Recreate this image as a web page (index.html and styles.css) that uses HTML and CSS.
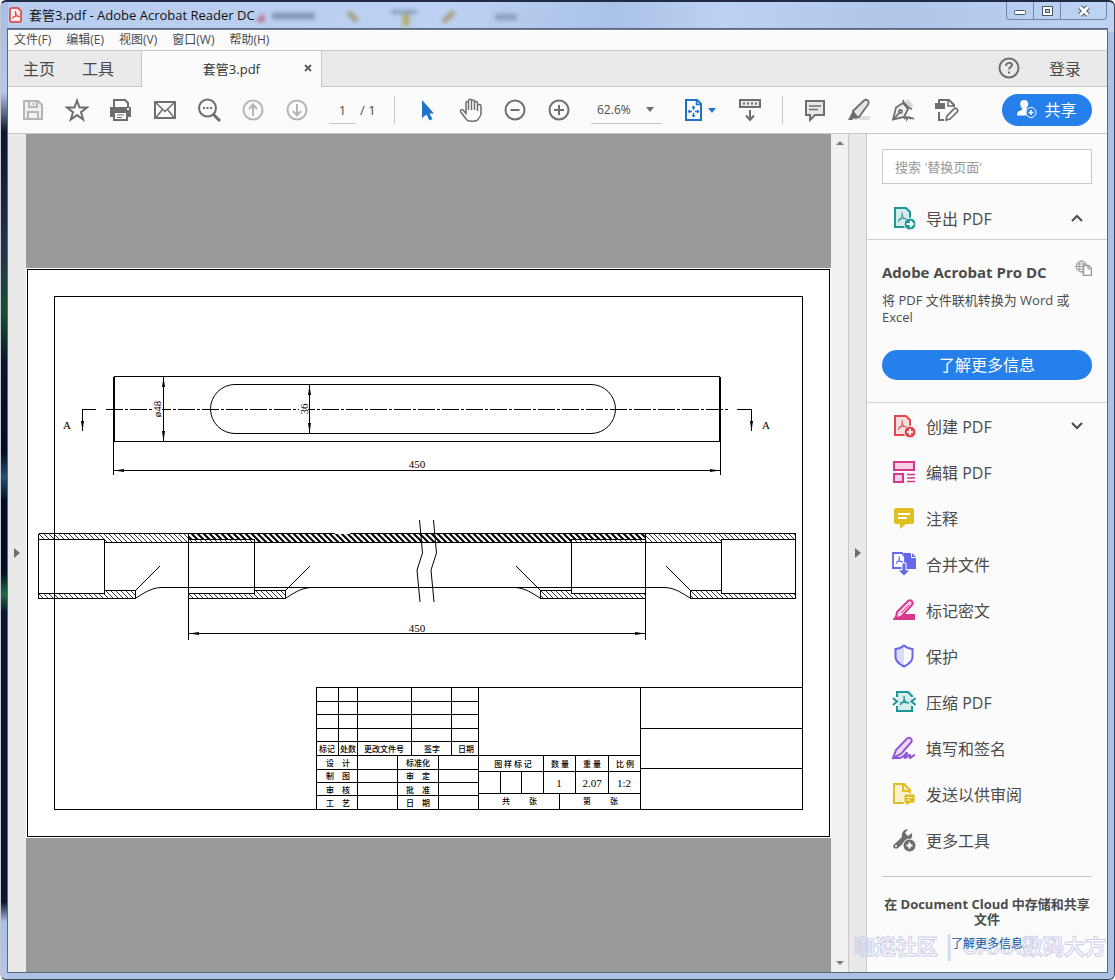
FILE: index.html
```html
<!DOCTYPE html>
<html lang="zh-CN">
<head>
  <meta charset="UTF-8">
  <title>套管3.pdf - Adobe Acrobat Reader DC</title>
  <link rel="stylesheet" href="styles.css">
</head>
<body>
  <div class="window">
    <header class="titlebar">
      <svg class="app-icon" width="13" height="16" viewBox="0 0 13 16">
        <path d="M1 2.5Q1 1 2.500 1H9l3 3v9.500Q12 15 10.500 15h-8Q1 15 1 13.500z" fill="#fbeeee" stroke="#dc3a35" stroke-width="1.500"/>
        <path d="M6.500 4.500c1.500 3-1 6-3 7M6.500 4.500c-1.500 2 2 5 4 5.500M3.500 10.500c2-1.500 5-2 7-1" fill="none" stroke="#dc3a35"/>
      </svg>
      <span class="title">套管3.pdf - Adobe Acrobat Reader DC</span>
      <svg class="glass" width="300" height="22" viewBox="0 0 300 22">
        <path d="M7 17l8-8v9z" fill="#b5395f"/>
        <path d="M23 12h43" stroke="#6c82a5" stroke-width="6"/>
        <path d="M99 8l9 9M205 8l-11 10" stroke="#a08a55" stroke-width="5"/>
        <path d="M142 8h26" stroke="#64799f" stroke-width="3"/>
        <path d="M157 10v12" stroke="#b1a34c" stroke-width="7"/>
        <path d="M246 13h22" stroke="#7c90b2" stroke-width="6"/>
      </svg>
      <div class="caption">
        <button type="button" aria-label="最小化"><svg width="14" height="12"><rect x="1.500" y="5.500" width="11" height="4" rx="1" fill="#fff" stroke="#4b566c"/></svg></button>
        <button type="button" aria-label="最大化"><svg width="14" height="12"><rect x="2.500" y="1.500" width="10" height="9" fill="#fff" stroke="#4b566c"/><rect x="5.500" y="4.500" width="4" height="3" fill="#b9cdec" stroke="#4b566c"/></svg></button>
        <button type="button" class="close" aria-label="关闭"><svg width="14" height="12"><path d="M3 2l8 8M11 2l-8 8" stroke="#4b566c" stroke-width="5"/><path d="M3 2l8 8M11 2l-8 8" stroke="#fff" stroke-width="3"/></svg></button>
      </div>
    </header>

    <div class="client">
      <nav class="menu">
        <a href="#">文件(F)</a>
        <a href="#">编辑(E)</a>
        <a href="#">视图(V)</a>
        <a href="#">窗口(W)</a>
        <a href="#">帮助(H)</a>
      </nav>

      <div class="tabs">
        <div class="home-tabs">
          <a href="#">主页</a>
          <a href="#">工具</a>
        </div>
        <div class="doc-tab">
          <span>套管3.pdf</span>
          <button type="button" aria-label="关闭标签"><svg width="8" height="8"><path d="M1 1l6 6M7 1L1 7" stroke="#5f5f5f" stroke-width="2"/></svg></button>
        </div>
        <div class="account">
          <button type="button" aria-label="帮助">
            <svg width="22" height="22" viewBox="0 0 22 22" fill="none" stroke="#6e6e6e" stroke-width="2"><circle cx="11" cy="11" r="9.500"/><path d="M8 9c0-4 6-4 6-1 0 2-3 2-3 4.500M11 14.500v2"/></svg>
          </button>
          <a href="#">登录</a>
        </div>
      </div>

      <div class="toolbar">
        <button type="button" class="tool" aria-label="保存" disabled>
          <svg width="24" height="24" viewBox="0 0 24 24" fill="none" stroke="#b5b5b5" stroke-width="2"><path d="M3 3h14l4 4v14H3z" fill="#f0f0f0"/><path d="M8 3v6h8V3" /><path d="M12.500 5v2M7 21v-7h10v7"/></svg>
        </button>
        <button type="button" class="tool" aria-label="加星标">
          <svg width="24" height="24" viewBox="0 0 24 24" fill="none" stroke="#6e6e6e" stroke-width="2"><path d="M12 2.500l2.500 7h7.500l-6 4.700 2.200 7.300-6.200-4.400-6.200 4.400L8 14.200 2 9.500h7.500z"/></svg>
        </button>
        <button type="button" class="tool" aria-label="打印">
          <svg width="24" height="24" viewBox="0 0 24 24"><path d="M5 9V2h11l3 3v4" fill="#fff" stroke="#6e6e6e" stroke-width="2"/><path d="M1 9h21v10H1z" fill="#6e6e6e"/><path d="M5 14h13v8H5z" fill="#fff" stroke="#6e6e6e" stroke-width="2"/><path d="M8 17h7M8 19.500h5" stroke="#6e6e6e"/><path d="M18 11h2" stroke="#fff" stroke-width="2"/></svg>
        </button>
        <button type="button" class="tool" aria-label="邮件">
          <svg width="24" height="24" viewBox="0 0 24 24" fill="none" stroke="#6e6e6e" stroke-width="2"><path d="M2 4h20v16H2z"/><path d="M2.500 4.500l9.500 9 9.500-9M3 19.500l6.500-8M21 19.500l-6.500-8" stroke-width="1.500"/></svg>
        </button>
        <button type="button" class="tool" aria-label="查找">
          <svg width="24" height="24" viewBox="0 0 24 24" fill="none" stroke="#6e6e6e" stroke-width="2"><circle cx="10.500" cy="10" r="8.500"/><path d="M16 16l7 7" stroke-width="3"/><path d="M6 10h2M9.500 10h2M13 10h2"/></svg>
        </button>
        <button type="button" class="tool" aria-label="上一页" disabled>
          <svg width="24" height="24" viewBox="0 0 24 24" fill="none" stroke="#b5b5b5" stroke-width="2"><circle cx="12" cy="12" r="9.500"/><path d="M12 18V7M8 11l4-4.500 4 4.500"/></svg>
        </button>
        <button type="button" class="tool" aria-label="下一页" disabled>
          <svg width="24" height="24" viewBox="0 0 24 24" fill="none" stroke="#b5b5b5" stroke-width="2"><circle cx="12" cy="12" r="9.500"/><path d="M12 6v11M8 13l4 4.500 4-4.500"/></svg>
        </button>
        <input class="page-number" type="text" value="1" aria-label="页码">
        <span class="page-total">/ 1</span>
        <span class="separator"></span>
        <button type="button" class="tool" aria-label="选择工具">
          <svg width="24" height="24" viewBox="0 0 24 24"><path d="M7 2v18l4.500-3.500 3 6 3-1.500-3-5.500H19z" fill="#1f74ca"/></svg>
        </button>
        <button type="button" class="tool" aria-label="抓手工具">
          <svg width="24" height="24" viewBox="0 0 24 24" fill="#fff" stroke="#6e6e6e" stroke-width="1.500"><path d="M8.500 22.500C6 20 4 17 1.500 13.500c-.5-2 1.500-2.500 3-1l2.500 3V5c0-2 2.500-2 2.500 0v7V3c0-2.200 3-2.200 3 0v9V3.500c0-2 3-2 3 0V12V5c0-2 3-2 3 0v8V8c0-2 3.500-2 3.500 0L22 16c-.5 3-2 4.500-4 6.500-2 1-7 1-9.500 0z"/></svg>
        </button>
        <button type="button" class="tool" aria-label="缩小">
          <svg width="24" height="24" viewBox="0 0 24 24" fill="none" stroke="#6e6e6e" stroke-width="2"><circle cx="12" cy="12" r="9.500"/><path d="M7.500 12h9"/></svg>
        </button>
        <button type="button" class="tool" aria-label="放大">
          <svg width="24" height="24" viewBox="0 0 24 24" fill="none" stroke="#6e6e6e" stroke-width="2"><circle cx="12" cy="12" r="9.500"/><path d="M7 12h10M12 7v10"/></svg>
        </button>
        <span class="zoom">
          <select aria-label="缩放"><option>62.6%</option></select>
          <svg class="caret" width="8" height="5"><path d="M0 0h8L4 5z" fill="#6e6e6e"/></svg>
        </span>
        <button type="button" class="fit" aria-label="适合页面">
          <svg width="20" height="24" viewBox="0 0 20 24" fill="none" stroke="#1f74ca" stroke-width="2"><path d="M2 2h11l4 4v16H2z"/><path d="M12.500 2v4.500H17" stroke-width="1.500"/><path d="M9.500 8v4M9.500 15v4M4 13.500h4M11 13.500h4" stroke-width="1.500"/><path d="M7.500 10l2-2.500 2 2.500zM7.500 17l2 2.500 2-2.500zM6 11.500l-2.500 2 2.500 2zM13 11.500l2.500 2-2.500 2z" fill="#1f74ca" stroke="none"/></svg>
          <svg width="8" height="5"><path d="M0 0h8L4 5z" fill="#1f74ca"/></svg>
        </button>
        <button type="button" class="tool" aria-label="滚动页面">
          <svg width="24" height="24" viewBox="0 0 24 24" fill="none" stroke="#6e6e6e" stroke-width="2"><path d="M2 2h20v7H2z" fill="#e6e6e6"/><path d="M5 5.500h14" stroke-dasharray="2 2"/><path d="M12 12v9M8 17.500l4 4.500 4-4.500"/></svg>
        </button>
        <span class="separator"></span>
        <button type="button" class="tool" aria-label="添加附注">
          <svg width="24" height="24" viewBox="0 0 24 24" fill="#e8e8e8" stroke="#6e6e6e" stroke-width="2"><path d="M3 3h18v14H12l-5 5v-5H3z"/><path d="M6 8h12M6 11.500h9" stroke-width="1.500"/></svg>
        </button>
        <button type="button" class="tool" aria-label="高亮文本">
          <svg width="24" height="24" viewBox="0 0 24 24"><path d="M8 18h15v4H4z" fill="#dedede"/><path d="M6 13L17 2.500c3-2 6 1 4 4L12 19H7z" fill="#e6e6e6" stroke="#6e6e6e" stroke-width="1.800"/><path d="M6 12.500l5.500 6.500L9 21l-2-1-2 2H1z" fill="#6e6e6e"/></svg>
        </button>
        <button type="button" class="tool" aria-label="签名">
          <svg width="24" height="24" viewBox="0 0 24 24" fill="none" stroke="#6e6e6e" stroke-width="1.800"><path d="M15 3l6 6" stroke="#d8d8d8" stroke-width="5"/><path d="M12 5L5 9.500 2 21.500l11-2.500 4-8z" fill="#f0f0f0"/><path d="M12 2l1 3 5 5 3 1M3 21l5-6"/><path d="M13 21c4-4 3-1 3 0 2-3 3-2 3 0 1-2 2-1 4 0"/><circle cx="9.500" cy="13.500" r="1.500"/></svg>
        </button>
        <button type="button" class="tool" aria-label="更多编辑工具">
          <svg width="24" height="24" viewBox="0 0 24 24" fill="none" stroke="#6e6e6e" stroke-width="2"><path d="M4 6V2h10l5 5v2M4 14v8h5"/><path d="M0 5h10v6H0z" fill="#6e6e6e" stroke="none"/><path d="M13 2v6h6" stroke-width="1.500"/><path d="M11 22l1-4 7.500-7.500c1.500-1 4 1.500 3 3L15 21z" fill="#fff" stroke-width="1.700"/></svg>
        </button>
        <button type="button" class="share">
          <svg width="20" height="18" viewBox="0 0 20 18"><path d="M7 0c6 0 4.500 7 2.500 8v2c3 1 5 1.500 5 5.500H0C0 11 2 11 5 10V8C2.500 6 2 0 7 0z" fill="#fff"/><circle cx="14" cy="12.500" r="5" fill="#2680eb" stroke="#fff"/><path d="M11.500 12.500h5M14 10v5" stroke="#fff" stroke-width="1.500"/></svg>
          共享
        </button>
      </div>

      <div class="main">
        <button type="button" class="rail" aria-label="导览窗格"><svg width="6" height="10"><path d="M0 0l6 5-6 5z" fill="#6e6e6e"/></svg></button>

        <main class="document">
          <svg class="sheet" viewBox="26 268 805 570">
            <defs>
              <pattern id="hatch" width="5" height="5" patternUnits="userSpaceOnUse"><path d="M-1 -1l7 7M-1 4l2 2M4 -1l2 2" stroke="#000" stroke-width="0.800"/></pattern>
              <pattern id="dense" width="6" height="6" patternUnits="userSpaceOnUse"><path d="M-1 -1l8 8M-1 5l2 2M5 -1l2 2" stroke="#000" stroke-width="2"/></pattern>
              <marker id="arrow" viewBox="0 0 10 4" refX="10" refY="2" markerWidth="10" markerHeight="4" markerUnits="userSpaceOnUse" orient="auto-start-reverse"><path d="M0 0.500l10 1.500-10 1.500z"/></marker>
            </defs>
            <rect x="26" y="268" width="805" height="570" fill="#fff"/>
            <g class="line">
              <path d="M27.500 269.500h802v567h-802zM54.500 296.500h748v513h-748z"/>

              <!-- top view -->
              <path d="M114.500 376.500H719.500V441.500H114.500z"/>
              <path d="M114 377v64M720 377v64" stroke-width="2"/>
              <path d="M235 384.500H591M235 433.500H591"/>
              <path class="soft" d="M235 384.500a24.500 24.500 0 0 0 0 49M591 384.500a24.500 24.500 0 0 1 0 49"/>
              <path d="M106 409.500H728" stroke-dasharray="17 2 3 2"/>
              <path d="M163.500 377v64" marker-start="url(#arrow)" marker-end="url(#arrow)"/>
              <path d="M309.500 385v48" marker-start="url(#arrow)" marker-end="url(#arrow)"/>
              <path d="M96 409.500H82.500V431" marker-end="url(#arrow)"/>
              <path d="M737 409.500h14.500V431" marker-end="url(#arrow)"/>
              <path d="M113.500 441v34M720.500 441v34"/>
              <path d="M114 470.500H720" marker-start="url(#arrow)" marker-end="url(#arrow)"/>
            </g>

            <!-- section walls -->
            <path fill="url(#hatch)" d="M38 534h150v8h-84v-3H38zM645 534h151v5h-75v3h-76zM188 540h66v2h-66zM571 540h74v2h-74zM38 594h66v-4h31v8H38zM188 594h66v-4h31v8h-97zM540 590h31v4h74v4H540zM690 590h31v4h75v4H690z"/>
            <path fill="url(#dense)" d="M188 534h457v5h-74v3H254v-3h-66z"/>
            <g class="line">
              <path d="M38.500 533.500H335M350 533.500H795.500V598.500H690.500V590.500H721.500M38.500 533.500V598.500H135.500V590.500H104.500"/>
              <path d="M38 539.500H104.500V593.500H38M188 539.500H254.500V593.500H188M645 539.500H571.500V593.500H645M795 539.500H721.500V593.500H795"/>
              <path d="M104 542.500H721M160 587.500H666"/>
              <path d="M188.500 534V640M645.500 534V640M188 598.500H285.500V590.500H254M645 598.500H540.500V590.500H571"/>
              <path class="soft" d="M136 590l24-24M136 598c8-5 15-10 25-10.500M286 590l24-24M286 598c8-5 15-10 25-10.500M540 590l-24-24M540 598c-8-5-15-10-25-10.500M690 590l-24-24M690 598c-8-5-15-10-25-10.500"/>
              <path class="soft" d="M419.500 520l3 33-5.500 17 3 32M433.500 520l3 33-5.500 17 3 32"/>
              <path d="M189 633.500H645" marker-start="url(#arrow)" marker-end="url(#arrow)"/>

              <!-- title block -->
              <path d="M802 687.500H316.500V809M640.500 687V809M478.500 687V809M640 728.500H802M640 768.500H802"/>
              <path d="M316 701.500H478M316 714.500H478M316 728.500H478M316 741.500H478M316 755.500H640M316 769.500H478M316 782.500H478M316 795.500H478"/>
              <path d="M338.500 687V755M357.500 687V809M411.500 687V755M451.500 687V755M397.500 755V809M438.500 755V809"/>
              <path d="M478 771.500H640M478 793.500H640M500.500 771V793M521.500 771V793M543.500 755V793M575.500 755V793M608.500 755V793M559.500 793V809"/>
            </g>

            <g class="dim">
              <text x="67" y="429">A</text>
              <text x="766" y="429">A</text>
              <text x="417" y="468">450</text>
              <text x="417" y="632">450</text>
              <rect x="153" y="402" width="9" height="15" fill="#fff"/>
              <rect x="299" y="403" width="9" height="12" fill="#fff"/>
              <text transform="translate(161 409) rotate(-90)">ø48</text>
              <text transform="translate(308 409) rotate(-90)">36</text>
              <text x="559" y="787">1</text>
              <text x="592" y="787">2.07</text>
              <text x="624" y="787">1:2</text>
            </g>
            <g class="note">
              <text x="327" y="752">标记</text><text x="348" y="752">处数</text><text x="384" y="752">更改文件号</text><text x="432" y="752">签字</text><text x="466" y="752">日期</text>
              <text x="338" y="766">设　计</text><text x="338" y="779">制　图</text><text x="338" y="793">审　核</text><text x="338" y="806">工　艺</text>
              <text x="418" y="766">标准化</text><text x="418" y="779">审　定</text><text x="418" y="793">批　准</text><text x="418" y="806">日　期</text>
              <text x="513" y="767">图 样 标 记</text><text x="560" y="767">数 量</text><text x="592" y="767">重 量</text><text x="625" y="767">比 例</text>
              <text x="506" y="804">共</text><text x="533" y="804">张</text><text x="587" y="804">第</text><text x="614" y="804">张</text>
            </g>
          </svg>
        </main>

        <div class="scrollbar">
          <svg width="8" height="4"><path d="M0 4l4-4 4 4z" fill="#7c7c7c"/></svg>
          <svg width="8" height="4"><path d="M0 0l4 4 4-4z" fill="#7c7c7c"/></svg>
        </div>
        <button type="button" class="rail splitter" aria-label="工具窗格"><svg width="6" height="10"><path d="M0 0l6 5-6 5z" fill="#6e6e6e"/></svg></button>

        <aside class="panel">
          <input class="search" type="text" placeholder="搜索 '替换页面'" aria-label="搜索工具">
          <a href="#" class="item export">
            <svg width="24" height="24" viewBox="0 0 24 24"><path d="M3 2h11l4 4v15H3z" fill="#d3ebea" stroke="#1c9798" stroke-width="2"/><path d="M10 6c1 5-2 8-4 10M10 9c1 3 3 4 5 5M6 14c3-2 6-2 9-1" fill="none" stroke="#1c9798"/><circle cx="18" cy="18" r="6" fill="#1c9798" stroke="#fbfbfb"/><path d="M14.500 18h6M18 15l3 3-3 3" fill="none" stroke="#fff" stroke-width="1.800"/></svg>
            <span>导出 PDF</span>
            <svg class="chevron" width="14" height="10"><path d="M2 8l5-5 5 5" fill="none" stroke="#4b4b4b" stroke-width="2"/></svg>
          </a>
          <section class="promo">
            <div class="promo-head">
              <h2>Adobe Acrobat Pro DC</h2>
              <svg width="17" height="16" viewBox="0 0 17 16" fill="none" stroke="#989898"><circle cx="6.500" cy="6.500" r="5.500"/><ellipse cx="6.500" cy="6.500" rx="2.500" ry="5.500"/><path d="M1 6.500h11M2 4h9M2 9h9"/><path d="M8.500 5.500h5l3 3v7h-8z" fill="#fbfbfb" stroke-width="1.500"/><path d="M13 6v3h3"/></svg>
            </div>
            <p>将 PDF 文件联机转换为 Word 或 Excel</p>
            <button type="button">了解更多信息</button>
          </section>
          <nav class="tools">
            <a href="#" class="item">
              <svg width="24" height="24" viewBox="0 0 24 24"><path d="M3 2h11l4 4v15H3z" fill="#f9dfdf" stroke="#e34850" stroke-width="2"/><path d="M10 6c1 5-2 8-4 10M10 9c1 3 3 4 5 5M6 14c3-2 6-2 9-1" fill="none" stroke="#e34850"/><circle cx="18" cy="18" r="6" fill="#e34850" stroke="#fbfbfb"/><path d="M15 18h6M18 15v6" stroke="#fff" stroke-width="2"/></svg>
              <span>创建 PDF</span>
              <svg class="chevron" width="14" height="10"><path d="M2 2l5 5 5-5" fill="none" stroke="#4b4b4b" stroke-width="2"/></svg>
            </a>
            <a href="#" class="item">
              <svg width="24" height="24" viewBox="0 0 24 24" fill="#f5d0e5" stroke="#d83790" stroke-width="2"><path d="M2 2h20v8H2zM2 14h9v8H2z"/><path d="M15 14.500h8M15 18h8M15 21.500h8" stroke-width="1.300"/></svg>
              <span>编辑 PDF</span>
            </a>
            <a href="#" class="item">
              <svg width="24" height="24" viewBox="0 0 24 24"><path d="M3 2h17q2 0 2 2v12q0 2-2 2h-6l-6 5v-5H4q-2 0-2-2V4q0-2 2-2z" fill="#dfbf22"/><path d="M6 8h12M6 12h9" stroke="#fff" stroke-width="2"/></svg>
              <span>注释</span>
            </a>
            <a href="#" class="item">
              <svg width="24" height="24" viewBox="0 0 24 24"><path d="M12 1h8l4 4v12H12z" fill="#6767ec"/><path d="M19.500 0v5.500H24" stroke="#fbfbfb" fill="none"/><path d="M1 1h9l3 4v11H1z" fill="#fff" stroke="#6767ec" stroke-width="1.800"/><path d="M7 4c1 4-1 6-3 8M7 6c0 3 2 4 4 4M4 10c2-1 4-1 7 0" fill="none" stroke="#6767ec"/><path d="M10 11h4v7h4l-6 6-6-6h4z" fill="#6767ec" stroke="#fbfbfb"/></svg>
              <span>合并文件</span>
            </a>
            <a href="#" class="item">
              <svg width="24" height="24" viewBox="0 0 24 24"><path d="M1 21l4-5h18v6H1z" fill="#d83790"/><path d="M4 20l1-6L16 3c3-2 6 1 4 4L9 19z" fill="#f7d2e7" stroke="#d83790" stroke-width="2"/><path d="M9 15l8-8" stroke="#d83790"/></svg>
              <span>标记密文</span>
            </a>
            <a href="#" class="item">
              <svg width="24" height="24" viewBox="0 0 24 24"><path d="M12 2C9 4 6 5 3 5v8c0 5 5 8 9 10z" fill="#dadafa"/><path d="M12 1.500C9 4 6 5 3.500 5v8c0 5 4.500 7.500 8.500 9.500 4-2 8.500-4.500 8.500-9.500V5C18 5 15 4 12 1.500z" fill="none" stroke="#6767ec" stroke-width="2"/></svg>
              <span>保护</span>
            </a>
            <a href="#" class="item">
              <svg width="24" height="24" viewBox="0 0 24 24" fill="none" stroke="#1c9798" stroke-width="2"><path d="M5 7V2h11l4 4v1M20 16v5H5v-5" fill="#d8eceb"/><path d="M5 7h15v9H5z" fill="#d8eceb" stroke="none"/><path d="M1 8l4 3.500L1 15M23.500 8l-4 3.500 4 3.500"/><path d="M12 6c1 4-1 7-4 9M12 9c1 3 3 4 5 4M8 13c3-1 5-1 8 0" stroke-width="1.300"/></svg>
              <span>压缩 PDF</span>
            </a>
            <a href="#" class="item">
              <svg width="24" height="24" viewBox="0 0 24 24" fill="none" stroke="#9256d9" stroke-width="2"><path d="M1 22l3-8L15 2.500c3-2 6 1 4 4L9 18z" fill="#eadcf8"/><path d="M1 22h7c4-1 6-6 7-5s-4 5-2 5 4-4 5-3-1 3 0 3 3-3 5-3"/></svg>
              <span>填写和签名</span>
            </a>
            <a href="#" class="item">
              <svg width="24" height="24" viewBox="0 0 24 24"><path d="M2 2h10l6 6v13H2z" fill="#f8efcc" stroke="#dfbf22" stroke-width="2"/><path d="M11 2v7h7" fill="none" stroke="#dfbf22" stroke-width="2"/><path d="M12 12h11v9h-5l-4 3v-3h-2z" fill="#dfb90d" stroke="#fbfbfb"/><path d="M14.500 15.500h6M14.500 18h4" stroke="#fff"/></svg>
              <span>发送以供审阅</span>
            </a>
            <a href="#" class="item">
              <svg width="24" height="24" viewBox="0 0 24 24"><path d="M1.500 17L10 9c-1-4 2-8 6-8l-3 4 3 3 4-3c1 5-2 8-6 8l-8 7c-3 2-6-1-4.500-3z" fill="#6e6e6e"/><circle cx="4" cy="18" r="1" fill="#fff"/><circle cx="17.500" cy="17.500" r="6.500" fill="#6e6e6e" stroke="#fbfbfb"/><path d="M14.500 17.500h6M17.500 14.500v6" stroke="#fff" stroke-width="2"/></svg>
              <span>更多工具</span>
            </a>
          </nav>
          <footer class="cloud">
            <strong>在 Document Cloud 中存储和共享文件</strong>
            <a href="#">了解更多信息</a>
          </footer>
        </aside>
      </div>
    </div>
    <div class="watermark">咖迷社区 │ CAXA数码大方</div>
  </div>
</body>
</html>
```
FILE: styles.css
```css
* {
  box-sizing: border-box;
}

body {
  margin: 0;
  font-family: "Open Sans", "Noto Sans CJK SC", sans-serif;
  font-size: 13px;
  color: #4b4b4b;
}

a {
  color: inherit;
  text-decoration: none;
}

button {
  padding: 0;
  border: none;
  background: none;
  font: inherit;
  color: inherit;
}

svg {
  display: block;
  flex: none;
}

.window {
  position: relative;
  display: flex;
  flex-direction: column;
  min-height: 100vh;
  padding: 0 7px 7px 7px;
  border: 1px solid #3d4657;
  border-top: 2px solid #202b45;
  border-left-color: #c3c8d2;
  border-radius: 6px;
  background:
    linear-gradient(#a9bde3 0, #b4c8e8 90px, #0b1530 130px, #26334e 250px, #18502f 310px, #0b1530 360px, #020c22 450px, #24506f 475px, #020c22 500px, #020c22 570px, #1d6b43 592px, #0b1530 610px, #0b1530 900px, #a9bfe4 920px, #b4c8e8 100%) left / 7px 100% no-repeat,
    linear-gradient(100deg, #b7ccee, #bdd2f2 40%, #aac2e8 55%, #bdd2f2 65%, #afc6e9 80%, #bfd4f3) top / 100% 30px no-repeat,
    #abc1e5;
}

.titlebar {
  display: flex;
  align-items: center;
  height: 27px;
  padding: 0 0 2px 1px;
  color: #111;
}

.title {
  margin-left: 7px;
}

.glass {
  margin-left: -6px;
  filter: blur(2px);
  opacity: 0.8;
}

.caption {
  display: flex;
  align-self: flex-start;
  height: 18px;
  margin-left: auto;
  border: 1px solid #7386a8;
  border-top: none;
  border-radius: 0 0 4px 4px;
}

.caption button {
  display: flex;
  align-items: center;
  justify-content: center;
  width: 27px;
  border-right: 1px solid #7386a8;
}

.caption .close {
  width: 45px;
  border-right: none;
}

.client {
  flex: 1;
  display: flex;
  flex-direction: column;
  border-top: 1px solid #6f7f99;
  outline: 1px solid #59677f;
  background: #fbfbfb;
}

.menu {
  display: flex;
  gap: 15px;
  height: 21px;
  padding: 0 6px;
  border-bottom: 1px solid #c8c8c8;
  font-size: 12px;
  line-height: 20px;
}

.tabs {
  display: flex;
  height: 36px;
  background: #eaeaea;
  font-size: 16px;
}

.home-tabs {
  display: flex;
  align-items: center;
  gap: 27px;
  width: 134px;
  padding: 0 0 2px 15px;
  border-right: 1px solid #c8c8c8;
  border-bottom: 1px solid #c8c8c8;
}

.doc-tab {
  display: flex;
  align-items: center;
  justify-content: flex-end;
  gap: 44px;
  width: 179px;
  padding: 0 9px 2px 0;
  background: #fbfbfb;
  font-size: 13px;
  color: #323232;
}

.account {
  flex: 1;
  display: flex;
  align-items: center;
  justify-content: flex-end;
  gap: 29px;
  padding: 0 26px 2px 0;
  border-left: 1px solid #c8c8c8;
  border-bottom: 1px solid #c8c8c8;
}

.toolbar {
  display: flex;
  align-items: center;
  height: 47px;
  padding: 0 15px 0 3px;
  border-bottom: 1px solid #c8c8c8;
}

.tool {
  display: flex;
  align-items: center;
  justify-content: center;
  width: 44px;
  height: 32px;
}

.page-number {
  width: 27px;
  height: 28px;
  margin-left: 10px;
  padding: 0;
  border: none;
  border-bottom: 1px solid #c8c8c8;
  background: none;
  font: inherit;
  color: inherit;
  text-align: center;
}

.page-total {
  width: 34px;
  margin-left: 4px;
}

.separator {
  width: 1px;
  height: 28px;
  margin-right: 10px;
  background: #c8c8c8;
}

.zoom {
  display: flex;
  align-items: center;
  width: 71px;
  height: 28px;
  margin: 0 22px 0 10px;
  border-bottom: 1px solid #c8c8c8;
}

.zoom select {
  flex: 1;
  padding: 0 0 0 6px;
  border: none;
  background: none;
  appearance: none;
  font: inherit;
  font-size: 12px;
  color: inherit;
}

.zoom .caret {
  margin-right: 8px;
}

.fit {
  display: flex;
  align-items: center;
  gap: 4px;
  margin-right: 12px;
}

.fit + .tool {
  margin-right: 10px;
}

.share {
  display: flex;
  align-items: center;
  justify-content: center;
  gap: 7px;
  width: 90px;
  height: 32px;
  margin-left: auto;
  padding-bottom: 2px;
  border-radius: 16px;
  background: #2680eb;
  font-size: 16px;
  color: #fff;
}

.main {
  flex: 1;
  display: flex;
}

.rail {
  display: flex;
  align-items: center;
  justify-content: center;
  width: 18px;
  background: #e9e9e9;
}

.splitter {
  border-left: 1px solid #c8c8c8;
  border-right: 1px solid #c8c8c8;
  width: 19px;
}

.document {
  flex: 1;
  display: flex;
  align-items: center;
  background: #999;
}

.sheet {
  flex: 1;
  min-width: 0;
}

.line {
  fill: none;
  stroke: #000;
  shape-rendering: crispEdges;
}

.line .soft {
  shape-rendering: auto;
}

.dim {
  font-family: "Liberation Serif", serif;
  font-size: 11px;
  text-anchor: middle;
}

.note {
  font-family: "Noto Sans CJK SC", sans-serif;
  font-size: 8px;
  font-weight: 500;
  text-anchor: middle;
}

.scrollbar {
  display: flex;
  flex-direction: column;
  align-items: center;
  justify-content: space-between;
  width: 17px;
  padding: 7px 0;
  background: #f0f0f0;
}

.panel {
  width: 240px;
  padding-top: 15px;
}

.search {
  display: block;
  width: 210px;
  height: 35px;
  margin: 0 15px 14px;
  padding: 0 12px;
  border: 1px solid #c8c8c8;
  background: #fff;
  font: inherit;
}

.search::placeholder {
  color: #999;
}

.item {
  display: flex;
  align-items: center;
  height: 46px;
  padding: 0 23px 1px 25px;
  font-size: 16px;
}

.item span {
  margin-left: 10px;
}

.item .chevron {
  margin-left: auto;
}

.export {
  height: 42px;
  border-bottom: 1px solid #d0d0d0;
}

.promo {
  padding: 20px 15px 22px;
  border-bottom: 1px solid #d0d0d0;
}

.promo-head {
  display: flex;
  justify-content: space-between;
}

.promo h2 {
  margin: 0;
  font-size: 15px;
  line-height: 24px;
}

.promo p {
  margin: 8px 0 24px;
  line-height: 17px;
}

.promo button {
  width: 100%;
  height: 30px;
  border-radius: 15px;
  background: #2680eb;
  font-size: 16px;
  line-height: 30px;
  color: #fff;
}

.cloud {
  margin: 13px 15px 0;
  padding-top: 20px;
  border-top: 1px solid #c8c8c8;
  text-align: center;
  line-height: 15px;
}

.cloud strong {
  display: block;
  margin-bottom: 9px;
}

.cloud a {
  position: relative;
  z-index: 2;
  font-size: 12px;
  color: #0d5aa7;
}

.watermark {
  position: absolute;
  right: 8px;
  bottom: 18px;
  font-family: "Liberation Sans", "Noto Sans CJK SC", sans-serif;
  font-size: 21px;
  font-weight: bold;
  line-height: 28px;
  white-space: nowrap;
  color: transparent;
  -webkit-text-stroke: 1px #cdd1ec;
  pointer-events: none;
}
```
